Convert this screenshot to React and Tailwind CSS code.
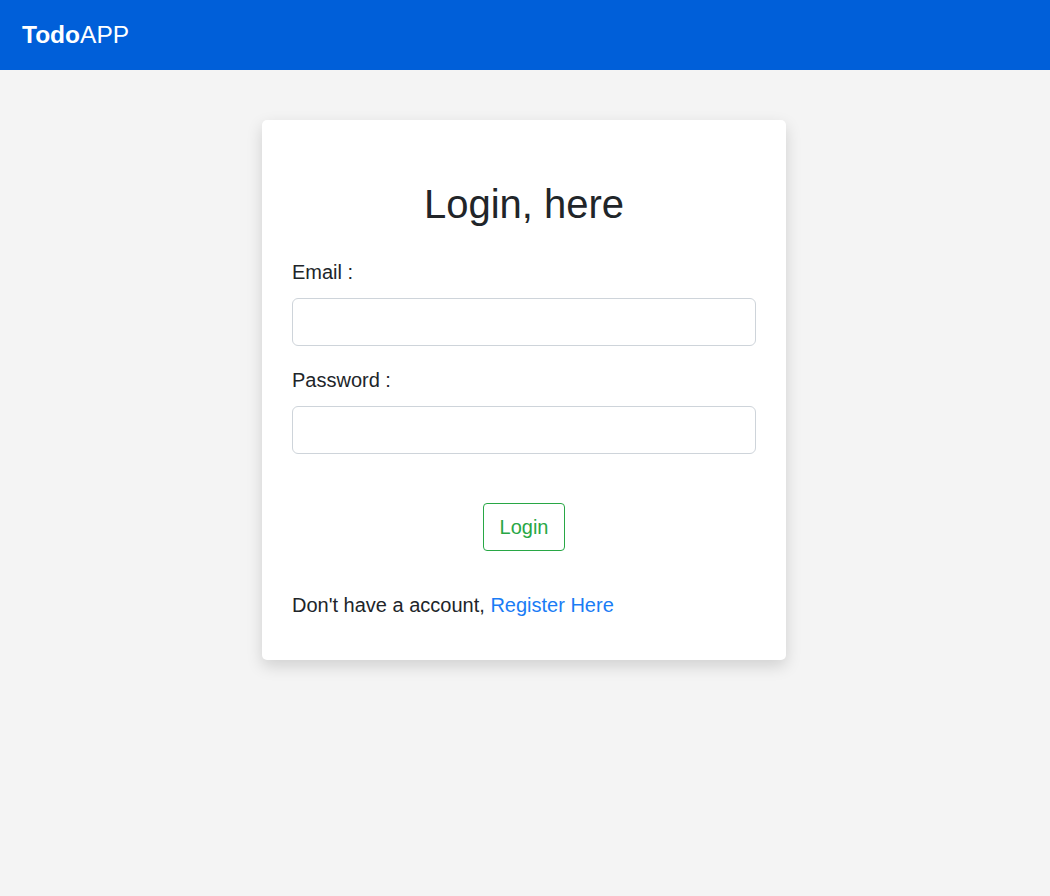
export default function App() {
  return (
    <div className="min-h-[896px] bg-[#f4f4f4] text-[#212529]" style={{ fontFamily: '"Liberation Sans", Arial, sans-serif' }}>
      <nav className="h-[70px] bg-[#005fd9] flex items-center px-[22px]">
        <span className="text-white text-[24.5px] leading-none">
          <b>Todo</b>APP
        </span>
      </nav>
      <div className="flex justify-center pt-[50px] pr-[2px]">
        <div className="w-[524px] bg-white rounded-[5px] shadow-[0_6px_16px_rgba(0,0,0,0.15)] px-[30px] pt-[60px] pb-[40px]">
          <h1 className="text-[40px] leading-[48px] text-center mb-[29px]">Login, here</h1>
          <label className="block text-[20px] leading-[30px] mb-[11px]">Email :</label>
          <input className="block w-full h-[48px] border border-[#ced4da] rounded-[6px] bg-white outline-none" />
          <label className="block text-[20px] leading-[30px] mt-[19px] mb-[11px]">Password :</label>
          <input type="password" className="block w-full h-[48px] border border-[#ced4da] rounded-[6px] bg-white outline-none" />
          <div className="flex justify-center mt-[49px]">
            <button className="h-[48px] w-[82px] border border-[#28a745] text-[#28a745] rounded-[4px] text-[20px] leading-[30px] bg-white">Login</button>
          </div>
          <p className="text-[20px] leading-[30px] mt-[39px]">
            Don't have a account, <a className="text-[#1a7cf5]">Register Here</a>
          </p>
        </div>
      </div>
    </div>
  );
}
